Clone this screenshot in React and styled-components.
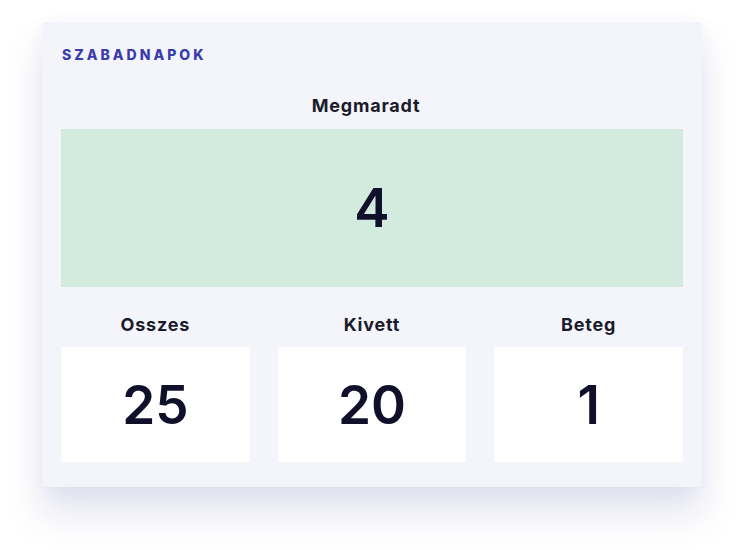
import React from "react";
import styled, { createGlobalStyle } from "styled-components";

const Global = createGlobalStyle`
  html, body { margin: 0; padding: 0; background: #ffffff; }
  body { font-family: Inter, "Noto Sans", sans-serif; }
`;

const Page = styled.div`
  padding: 22px 0 0 42px;
  width: 744px;
  height: 550px;
  box-sizing: border-box;
`;

const Card = styled.section`
  width: 660px;
  box-sizing: border-box;
  background: #f4f5fa;
  padding: 24px 19px 25px 19px;
  border-radius: 3px;
  box-shadow: 0 26px 36px rgba(90, 90, 170, 0.17), 0 4px 16px rgba(90, 90, 170, 0.06);
  display: flex;
  flex-direction: column;
`;

const Title = styled.h2`
  margin: 0 0 0 1px;
  font-size: 14px;
  line-height: 17px;
  font-weight: 800;
  letter-spacing: 3px;
  color: #3a3cae;
`;

const Label = styled.div`
  text-align: center;
  font-size: 18px;
  line-height: 20px;
  font-weight: 700;
  letter-spacing: 0.8px;
  color: #1b1b2b;
  padding-right: ${(p) => p.$shift || 0}px;
`;

const Main = styled.div`
  margin-top: 33px;
  display: flex;
  flex-direction: column;
  gap: 13px;
`;

const ValueBox = styled.div`
  height: ${(p) => p.$h}px;
  background: ${(p) => p.$bg};
  display: flex;
  align-items: center;
  justify-content: center;
  font-size: 53px;
  font-weight: 600;
  color: #10102a;
`;

const Grid = styled.div`
  margin-top: 28px;
  display: grid;
  grid-template-columns: repeat(3, 1fr);
  column-gap: 28px;
`;

const Cell = styled.div`
  display: flex;
  flex-direction: column;
  gap: 12px;
`;

const stats = [
  { label: "Osszes", value: 25 },
  { label: "Kivett", value: 20 },
  { label: "Beteg", value: 1 },
];

export default function App() {
  return (
    <Page>
      <Global />
      <Card>
        <Title>SZABADNAPOK</Title>
        <Main>
          <Label $shift={12}>Megmaradt</Label>
          <ValueBox $h={158} $bg="#d3ebde">4</ValueBox>
        </Main>
        <Grid>
          {stats.map((s) => (
            <Cell key={s.label}>
              <Label>{s.label}</Label>
              <ValueBox $h={115} $bg="#ffffff">{s.value}</ValueBox>
            </Cell>
          ))}
        </Grid>
      </Card>
    </Page>
  );
}
